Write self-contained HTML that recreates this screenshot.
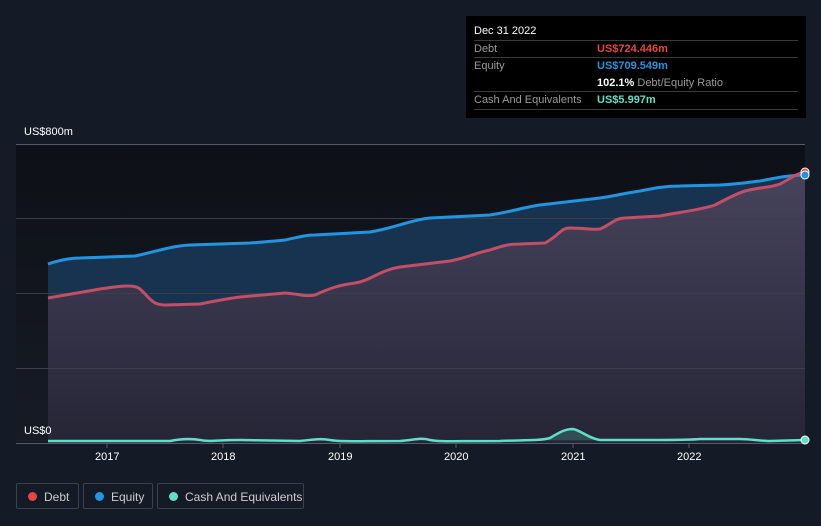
<!DOCTYPE html>
<html><head><meta charset="utf-8"><style>
body{margin:0;width:821px;height:526px;background:#151b26;font-family:"Liberation Sans",sans-serif;overflow:hidden;position:relative}
.tip{position:absolute;left:466px;top:16px;width:340px;height:102px;background:#000;color:#fff;font-size:11px}
.row{position:absolute;left:8px;width:324px;border-top:1px solid #3a3a3a;height:17px}
.l{position:absolute;left:0;top:2px;color:#9a9a9a}
.v{position:absolute;left:123px;top:2px;font-weight:bold}
.leg{position:absolute;top:483px;height:26px;border:1px solid #3c414c;border-radius:2px;color:#ccc;font-size:12px;line-height:26px;box-sizing:border-box}
.leg i{position:absolute;left:11px;top:8px;width:9px;height:9px;border-radius:50%}
.leg span{position:absolute;left:27px}
.ax{position:absolute;color:#fff;font-size:11px}
</style></head><body>
<svg width="821" height="526" style="position:absolute;left:0;top:0">
<defs>
<linearGradient id="bg" x1="0" y1="0" x2="0" y2="1"><stop offset="0" stop-color="#0d1016"/><stop offset="1" stop-color="#171b26"/></linearGradient>
<linearGradient id="dg" x1="0" y1="0" x2="0" y2="1"><stop offset="0" stop-color="#46435c"/><stop offset="1" stop-color="#262536"/></linearGradient>
</defs>
<rect x="16" y="144" width="789" height="299" fill="url(#bg)"/>
<path d="M48,264 C60,260 70,258 80,258 L135,256 C155,252 170,246 190,245 L250,243 C265,242 275,241 285,240 C300,237 305,235 315,235 L370,232 C395,228 410,220 430,218 L490,215 C510,212 525,207 540,205 L600,198 C615,196 625,193 640,191 C655,188 665,186 680,186 L720,185 C740,184 750,182 760,181 C775,178 790,175 805,175 L805,443 L48,443Z" fill="#173350"/>
<path d="M48,298 L100,289 C120,286 135,284 140,289 C150,298 152,305 165,305 L200,304 C220,300 230,298 240,297 L285,293 C300,294 305,297 315,295 C330,288 340,285 355,283 C370,281 380,270 400,267 L450,261 C470,257 475,253 490,250 C505,245 510,244 520,244 L545,243 C560,235 560,228 570,228 C585,228 590,230 600,229 C610,225 615,218 625,218 L660,216 C680,212 700,210 715,205 C730,197 738,193 745,191 C760,187 770,188 780,184 C790,179 795,174 805,172 L805,443 L48,443Z" fill="url(#dg)"/>
<g stroke="#3a3f4a" stroke-width="1"><line x1="16" y1="144.5" x2="805" y2="144.5" stroke="#555a64"/><line x1="16" y1="218.5" x2="805" y2="218.5"/><line x1="16" y1="293.5" x2="805" y2="293.5"/><line x1="16" y1="368.5" x2="805" y2="368.5"/><line x1="16" y1="443.5" x2="805" y2="443.5" stroke="#555a64"/></g>
<path d="M48,264 C60,260 70,258 80,258 L135,256 C155,252 170,246 190,245 L250,243 C265,242 275,241 285,240 C300,237 305,235 315,235 L370,232 C395,228 410,220 430,218 L490,215 C510,212 525,207 540,205 L600,198 C615,196 625,193 640,191 C655,188 665,186 680,186 L720,185 C740,184 750,182 760,181 C775,178 790,175 805,175" fill="none" stroke="#2394df" stroke-width="3"/>
<path d="M48,298 L100,289 C120,286 135,284 140,289 C150,298 152,305 165,305 L200,304 C220,300 230,298 240,297 L285,293 C300,294 305,297 315,295 C330,288 340,285 355,283 C370,281 380,270 400,267 L450,261 C470,257 475,253 490,250 C505,245 510,244 520,244 L545,243 C560,235 560,228 570,228 C585,228 590,230 600,229 C610,225 615,218 625,218 L660,216 C680,212 700,210 715,205 C730,197 738,193 745,191 C760,187 770,188 780,184 C790,179 795,174 805,172" fill="none" stroke="#c44e66" stroke-width="3"/>
<path d="M48,441 L100,441 L170,441 C180,439 190,438 200,440 C210,442 215,440 240,440 L300,441 C310,440 320,438 330,440 C340,442 360,441 400,441 C415,440 420,437 430,440 C440,442 450,441 500,441 C520,440 540,441 550,438 C560,432 565,429 573,429 C580,430 590,439 600,440 L650,440 C670,440 690,440 700,439 L740,439 C750,439 760,441 770,441 L805,440" fill="rgba(80,200,180,0.25)" stroke="#5ee0c8" stroke-width="2.5"/>
<circle cx="805" cy="172" r="4" fill="#e84545" stroke="#fff" stroke-width="1"/>
<circle cx="805" cy="175" r="4" fill="#2394df" stroke="#fff" stroke-width="1"/>
<circle cx="805" cy="440" r="4" fill="#5ee0c8" stroke="#fff" stroke-width="1"/>
<g stroke="#555a64"><line x1="107" y1="443" x2="107" y2="448"/><line x1="223" y1="443" x2="223" y2="448"/><line x1="340" y1="443" x2="340" y2="448"/><line x1="456" y1="443" x2="456" y2="448"/><line x1="573" y1="443" x2="573" y2="448"/><line x1="689" y1="443" x2="689" y2="448"/></g>
</svg>
<div class="ax" style="left:24px;top:126px">US$800m</div>
<div class="ax" style="left:24px;top:425px">US$0</div>
<div class="ax" style="left:95px;top:451px">2017</div>
<div class="ax" style="left:211px;top:451px">2018</div>
<div class="ax" style="left:328px;top:451px">2019</div>
<div class="ax" style="left:444px;top:451px">2020</div>
<div class="ax" style="left:561px;top:451px">2021</div>
<div class="ax" style="left:677px;top:451px">2022</div>
<div class="tip">
<div style="position:absolute;left:8px;top:9px">Dec 31 2022</div>
<div class="row" style="top:24px"><span class="l">Debt</span><span class="v" style="color:#e84545">US$724.446m</span></div>
<div class="row" style="top:41px"><span class="l">Equity</span><span class="v" style="color:#2394df">US$709.549m</span><span style="position:absolute;left:123px;top:19px"><b>102.1%</b> <span style="color:#9a9a9a">Debt/Equity Ratio</span></span></div>
<div class="row" style="top:75px"><span class="l">Cash And Equivalents</span><span class="v" style="color:#5ee0c8">US$5.997m</span></div>
<div class="row" style="top:93px;height:0"></div>
</div>
<div class="leg" style="left:16px;width:63px"><i style="background:#e84545"></i><span>Debt</span></div>
<div class="leg" style="left:83px;width:70px"><i style="background:#2394df"></i><span>Equity</span></div>
<div class="leg" style="left:157px;width:147px"><i style="background:#5ee0c8"></i><span>Cash And Equivalents</span></div>
</body></html>
